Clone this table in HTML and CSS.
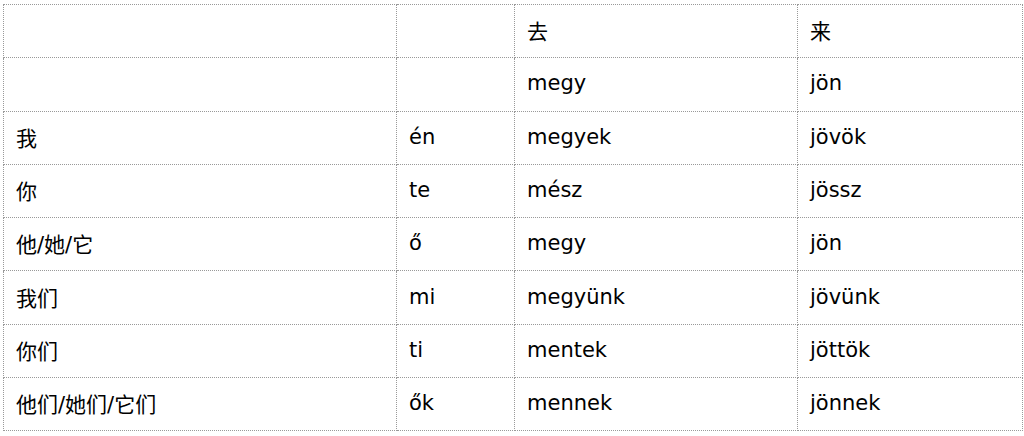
FILE: index.html
```html
<!DOCTYPE html>
<html lang="zh">
<head>
<meta charset="utf-8">
<title>Conjugation</title>
<link rel="stylesheet" href="styles.css">
</head>
<body>
<table class="conj">
  <colgroup>
    <col class="c1"><col class="c2"><col class="c3"><col class="c4">
  </colgroup>
  <tbody>
    <tr><td></td><td></td><td>去</td><td>来</td></tr>
    <tr><td></td><td></td><td>megy</td><td>jön</td></tr>
    <tr><td>我</td><td>én</td><td>megyek</td><td>jövök</td></tr>
    <tr><td>你</td><td>te</td><td>mész</td><td>jössz</td></tr>
    <tr><td>他/她/它</td><td>ő</td><td>megy</td><td>jön</td></tr>
    <tr><td>我们</td><td>mi</td><td>megyünk</td><td>jövünk</td></tr>
    <tr><td>你们</td><td>ti</td><td>mentek</td><td>jöttök</td></tr>
    <tr><td>他们/她们/它们</td><td>ők</td><td>mennek</td><td>jönnek</td></tr>
  </tbody>
</table>
</body>
</html>
```
FILE: styles.css
```css
html, body {
  margin: 0;
  padding: 0;
  background: #fff;
}
body {
  padding: 4px 0 0 3px;
  font-family: "DejaVu Sans", Verdana, "Noto Sans CJK SC", sans-serif;
  font-size: 21px;
  color: #000;
}
.conj {
  border-collapse: collapse;
  table-layout: fixed;
  width: 1019px;
}
.c1 { width: 393px; }
.c2 { width: 118px; }
.c3 { width: 283px; }
.c4 { width: 225px; }
.conj td {
  border: 1px dotted #999;
  padding: 0 12px 2px;
  height: 50.3px;
  vertical-align: middle;
  white-space: nowrap;
}
```
